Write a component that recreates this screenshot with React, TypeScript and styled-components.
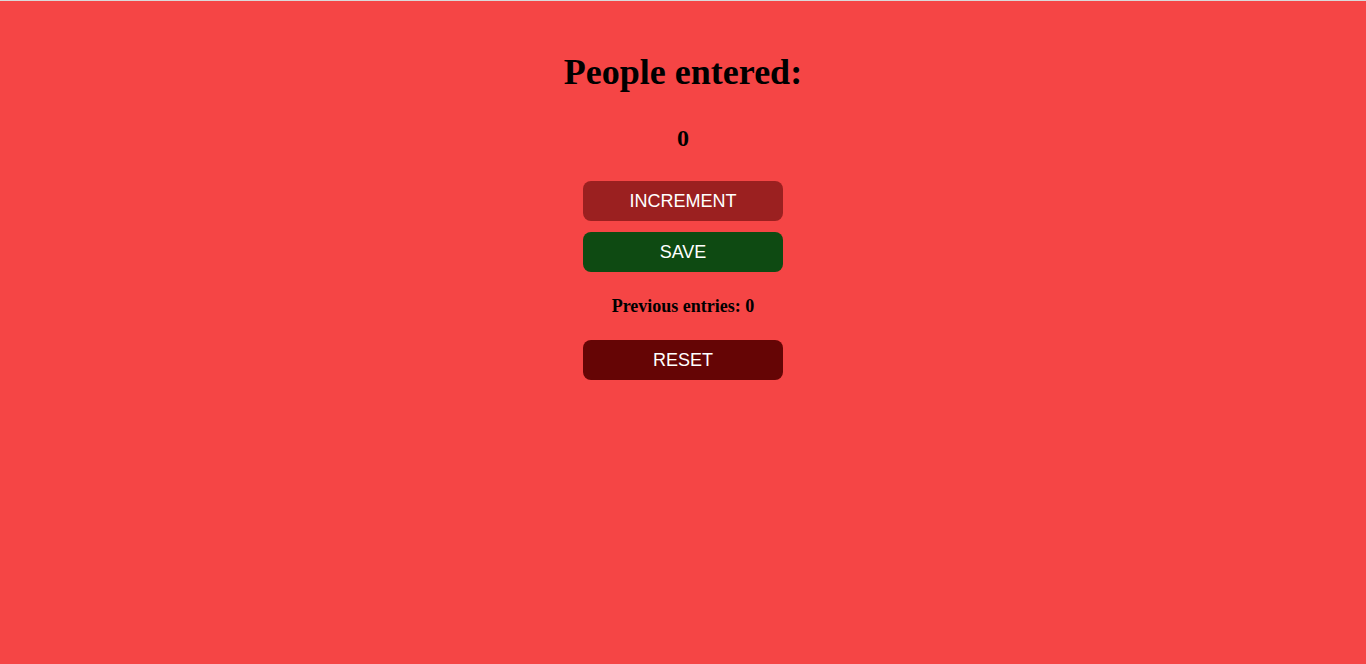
import React, { useState } from "react"
import styled, { createGlobalStyle } from "styled-components"

const GlobalStyle = createGlobalStyle`
  html, body {
    margin: 0;
    padding: 0;
    background: #f54545;
  }
  body {
    font-family: "Liberation Serif", "Times New Roman", serif;
  }
`

export default function App() {
    const [count, setCount] = useState(0)
    const [entries, setEntries] = useState<number[]>([])

    return <Page>
        <GlobalStyle />
        <Title>People entered:</Title>
        <Count>{count}</Count>
        <Buttons>
            <Button $bg="#9b2020" onClick={() => setCount(count + 1)}>INCREMENT</Button>
            <Button $bg="#0e4a12" onClick={() => { setEntries([...entries, count]); setCount(0) }}>SAVE</Button>
        </Buttons>
        <Entries>Previous entries: {entries.length ? entries.join(" - ") : 0}</Entries>
        <Button $bg="#650505" onClick={() => { setEntries([]); setCount(0) }}>RESET</Button>
    </Page>
}

const Page = styled.div`
  min-height: 663px;
  border-top: 1px solid #d9d9d9;
  display: flex;
  flex-direction: column;
  align-items: center;
  padding-top: 51px;
  box-sizing: border-box;
`
const Title = styled.h1`
  margin: 0;
  font-size: 36px;
  font-weight: bold;
  line-height: 41px;
`
const Count = styled.h2`
  margin: 31px 0 0;
  font-size: 24px;
  line-height: 28px;
`
const Buttons = styled.div`
  display: flex;
  flex-direction: column;
  gap: 11px;
  margin-top: 29px;
`
const Entries = styled.p`
  margin: 24px 0 23px;
  font-size: 18px;
  font-weight: bold;
  line-height: 21px;
`
const Button = styled.button<{ $bg: string }>`
  width: 200px;
  height: 40px;
  border: none;
  border-radius: 8px;
  background: ${p => p.$bg};
  color: #fff;
  font-family: "Liberation Sans", Arial, sans-serif;
  font-size: 18px;
  cursor: pointer;
`
